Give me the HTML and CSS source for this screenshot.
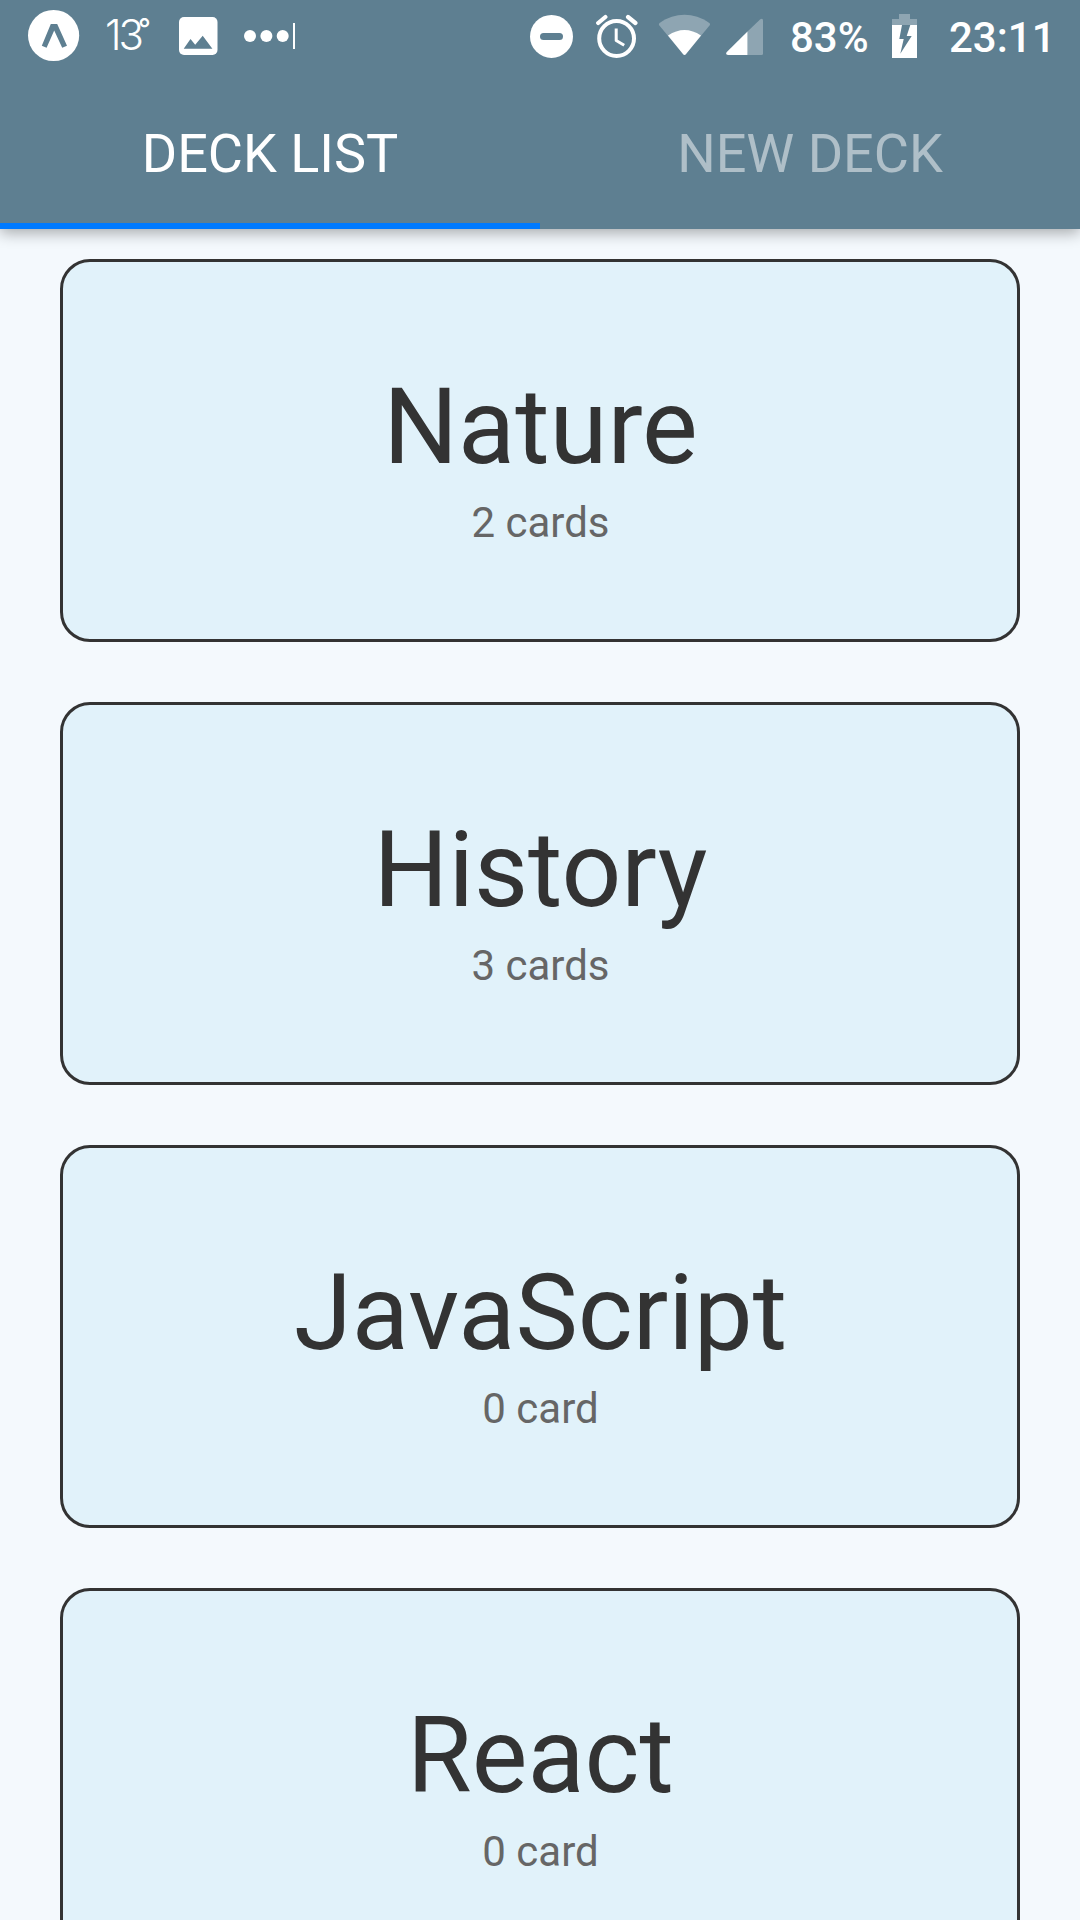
FILE: index.html
```html
<!DOCTYPE html>
<html lang="en">
<head>
<meta charset="utf-8">
<title>Deck List</title>
<link rel="stylesheet" href="styles.css">
</head>
<body>
<div class="app">
  <header class="header">
    <div class="status">
      <div class="status-group status-left">
        <svg class="icon-expo" viewBox="28 0 52 72"><circle cx="53.6" cy="35.5" r="25.6" fill="#fff"/><path class="cut" d="M50.8 24h6.4L67 45.7l-4.8 2L54.2 30.6 46.6 47.7 41.8 45.7z"/></svg>
        <span class="temp">13<span class="degree">°</span></span>
        <svg class="icon-image" viewBox="179 0 39 72"><rect x="179" y="17" width="38.5" height="38" rx="5" fill="#fff"/><path class="cut" d="M183.7 48.8l6.8-9.8 4.7 5.8 7.5-9.1 9.7 13.1z"/></svg>
        <svg class="icon-more" viewBox="244 0 51 72" fill="#fff"><circle cx="250" cy="36" r="6"/><circle cx="266.4" cy="36" r="6"/><circle cx="282.7" cy="36" r="6"/><path d="M293 23h2v26h-2z"/></svg>
      </div>
      <div class="status-group status-right">
        <svg class="icon-dnd" viewBox="530 0 43 72"><circle cx="551.5" cy="36.4" r="21.5" fill="#fff"/><rect class="cut" x="540" y="33" width="23" height="7" rx="3.5"/></svg>
        <svg class="icon-alarm" viewBox="596 0 42 72" fill="none" stroke="#fff"><circle cx="616.6" cy="38.5" r="17.4" stroke-width="4"/><path d="M616.2 28.5v12l8 4.8" stroke-width="3" stroke-linejoin="round"/><path d="M598.2 23l7.2-6M628 17l7.4 6" stroke-width="4.2" stroke-linecap="round"/></svg>
        <svg class="icon-wifi" viewBox="658 0 52 72" fill="#fff"><path fill-opacity=".3" d="M659.4 25.6C658.7 24.7 658.7 23.6 659.6 22.9C675.5 12.1 693.5 12.1 709.3 22.9C710.2 23.6 710.2 24.7 709.5 25.6L686 54.1Q684.5 55.8 683 54.1z"/><path d="M668 35.5Q684.5 24.5 701 35.5L686 54.1Q684.5 55.8 683 54.1z"/></svg>
        <svg class="icon-signal" viewBox="726 0 37 72" fill="#fff"><path fill-opacity=".3" d="M747.5 31.5L760.3 19.2Q763 17.6 763 20.6V53.5Q763 55 761.5 55h-14z"/><path d="M747.5 31.5V55H728Q725 54.6 726.8 52.1z"/></svg>
        <span class="battery-level">83%</span>
        <svg class="icon-battery" viewBox="892 0 25 72" fill="#fff"><path fill-opacity=".3" d="M899 14h11v5h7v6h-25v-6h7z"/><path d="M892 25h25v33h-25z"/><path class="cut" d="M902 25h8.3l-3.6 11h5L900.3 53.7 903.7 39h-4.4z"/></svg>
        <span class="clock">23:11</span>
      </div>
    </div>
    <nav class="tabs">
      <a class="tab tab-active">DECK LIST</a>
      <a class="tab">NEW DECK</a>
    </nav>
  </header>
  <main class="decks">
    <section class="deck"><h2 class="deck-title">Nature</h2><p class="deck-count">2 cards</p></section>
    <section class="deck"><h2 class="deck-title">History</h2><p class="deck-count">3 cards</p></section>
    <section class="deck"><h2 class="deck-title">JavaScript</h2><p class="deck-count">0 card</p></section>
    <section class="deck"><h2 class="deck-title">React</h2><p class="deck-count">0 card</p></section>
  </main>
</div>
</body>
</html>
```
FILE: styles.css
```css
* { box-sizing: border-box; }

body {
  margin: 0;
  background: #f4f9fd;
  font-family: Roboto, "Liberation Sans", sans-serif;
  color: #333;
}

.app {
  display: flex;
  flex-direction: column;
  width: 1080px;
  height: 1920px;
  overflow: hidden;
}

.header {
  flex: none;
  height: 229px;
  background: #5e7f91;
  color: #fff;
  box-shadow: 0 4px 14px rgba(0, 0, 0, 0.32);
}

.status {
  display: flex;
  justify-content: space-between;
  height: 72px;
  padding: 0 0 0 28px;
}

.status-group { display: flex; height: 72px; }
.status svg { display: block; flex: none; height: 72px; }
.cut { fill: #5e7f91; }

.icon-expo { width: 52px; }
.icon-image { width: 39px; margin-right: 26px; }
.icon-more { width: 51px; }

.temp {
  display: flex;
  width: 74px;
  margin-left: 25px;
  font: 350 42px/70px Inter, sans-serif;
  letter-spacing: -3px;
  white-space: nowrap;
}
.degree {
  margin-left: -3px;
  font-size: 28px;
  font-weight: 500;
  line-height: 59px;
  letter-spacing: 0;
}

.status-right { width: 550px; }
.icon-dnd { width: 43px; margin-right: 23px; }
.icon-alarm { width: 42px; margin-right: 20px; }
.icon-wifi { width: 52px; margin-right: 16px; }
.icon-signal { width: 37px; margin-right: 27px; }
.icon-battery { width: 25px; margin-right: 32px; }

.battery-level,
.clock {
  font-size: 42px;
  font-weight: 500;
  line-height: 76px;
  white-space: nowrap;
}
.battery-level { width: 102px; }

.tabs { display: flex; height: 157px; }

.tab {
  flex: 1;
  border-bottom: 6px solid transparent;
  font-size: 54px;
  line-height: 163px;
  height: 157px;
  text-align: center;
  color: rgba(255, 255, 255, 0.5);
}
.tab-active { color: #fff; border-color: #007aff; }

.decks {
  display: flex;
  flex-direction: column;
  gap: 60px;
  padding: 30px 60px 0;
}

.deck {
  flex: none;
  height: 383px;
  padding-top: 104px;
  border: 3px solid #333;
  border-radius: 30px;
  background: #e1f2fa;
  text-align: center;
}

.deck-title {
  margin: 0;
  padding-left: 1px;
  font-size: 105px;
  font-weight: 400;
  line-height: 123px;
}

.deck-count {
  margin: 9px 0 0;
  padding-left: 1px;
  font-size: 42px;
  line-height: 49px;
  color: #666;
}
```
